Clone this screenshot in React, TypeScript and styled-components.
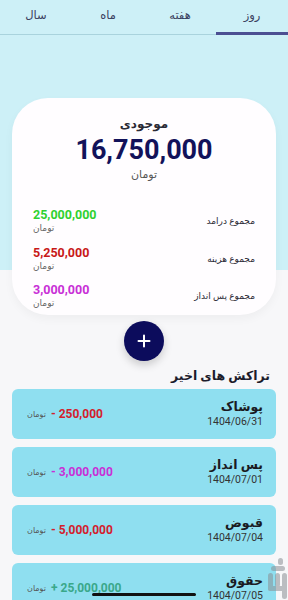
import styled, { createGlobalStyle } from "styled-components";

const GlobalStyle = createGlobalStyle`
	* {
		box-sizing: border-box;
	}
	html, body {
		margin: 0;
		padding: 0;
	}
	body {
		font-family: "Roboto", "DejaVu Sans", sans-serif;
		background: linear-gradient(#cdf0f7 0 270px, #f7f7f9 270px);
		min-height: 600px;
	}
`;

const Page = styled.div`
	direction: rtl;
	width: 288px;
	padding-bottom: 40px;
`;

const Tabs = styled.nav`
	display: flex;
	height: 35px;
	border-bottom: 1px solid #a9d3dd;
`;

const Tab = styled.div<{ $active?: boolean }>`
	flex: 1;
	display: flex;
	align-items: center;
	justify-content: center;
	font-size: 11.5px;
	color: #3b4160;
	border-bottom: 3px solid ${(p) => (p.$active ? "#4b4f92" : "transparent")};
	margin-bottom: -1px;
	padding-bottom: 2px;
`;

const SummaryCard = styled.section`
	margin: 63px 12px 0;
	background: #fffdff;
	border-radius: 36px;
	padding: 17px 21px 5px;
	box-shadow: 0 4px 10px rgba(0, 0, 0, 0.04);
`;

const BalanceTitle = styled.div`
	text-align: center;
	font-size: 12px;
	font-weight: bold;
	line-height: 18px;
	color: #2a2a35;
`;

const BalanceAmount = styled.div`
	text-align: center;
	font-size: 27px;
	font-weight: bold;
	line-height: 34px;
	color: #12125a;
	direction: ltr;
`;

const BalanceUnit = styled.div`
	text-align: center;
	font-size: 11px;
	line-height: 16px;
	color: #555;
	margin-bottom: 24px;
`;

const TotalRow = styled.div`
	display: flex;
	align-items: center;
	justify-content: space-between;
	margin-bottom: 9.5px;

	&:last-child {
		margin-bottom: 0;
	}
`;

const TotalLabel = styled.div`
	font-size: 9px;
	color: #2a2a35;
`;

const TotalValue = styled.div`
	display: flex;
	flex-direction: column;
	align-items: flex-end;
`;

const Amount = styled.div<{ $color: string }>`
	font-size: 12.5px;
	font-weight: bold;
	line-height: 15px;
	color: ${(p) => p.$color};
	direction: ltr;
`;

const Unit = styled.div`
	font-size: 9px;
	line-height: 13px;
	color: #666;
`;

const AddButton = styled.button`
	display: flex;
	align-items: center;
	justify-content: center;
	width: 40px;
	height: 40px;
	margin: 6px auto 0;
	border: none;
	border-radius: 50%;
	background: #0c0c5c;
	box-shadow: 0 4px 8px rgba(0, 0, 0, 0.18);
	padding: 0;
`;

const SectionTitle = styled.h2`
	margin: 6px 18px 0 0;
	font-size: 12.5px;
	font-weight: bold;
	line-height: 18px;
	color: #1c1c2c;
`;

const List = styled.div`
	display: flex;
	flex-direction: column;
	gap: 8px;
	margin: 4px 12px 0;
`;

const TxCard = styled.div`
	display: flex;
	align-items: center;
	justify-content: space-between;
	height: 50px;
	padding: 0 13px 0 15px;
	background: #8fdff0;
	border-radius: 6px;
`;

const TxInfo = styled.div`
	display: flex;
	flex-direction: column;
	align-items: flex-start;
`;

const TxTitle = styled.div`
	font-size: 12.5px;
	font-weight: bold;
	line-height: 16px;
	color: #1a1a22;
`;

const TxDate = styled.div`
	font-size: 10.5px;
	line-height: 14px;
	color: #333;
`;

const TxAmount = styled.div`
	display: flex;
	align-items: center;
	gap: 3px;
`;

const TxValue = styled.span<{ $color: string }>`
	font-size: 12px;
	font-weight: bold;
	color: ${(p) => p.$color};
	direction: ltr;
`;

const TxSign = styled.span<{ $color: string }>`
	font-size: 12px;
	font-weight: bold;
	color: ${(p) => p.$color};
`;

const TxUnit = styled.span`
	font-size: 8px;
	color: #555;
	margin-right: 2px;
`;

const HomeIndicator = styled.div`
	position: fixed;
	left: 92px;
	bottom: 4px;
	width: 104px;
	height: 3px;
	border-radius: 2px;
	background: #111;
`;

const Watermark = styled.svg`
	position: fixed;
	right: 0;
	bottom: 0;
	opacity: 0.55;
`;

const tabs = ["روز", "هفته", "ماه", "سال"];

const totals = [
	{ label: "مجموع درامد", value: "25,000,000", color: "#2fd12f" },
	{ label: "مجموع هزینه", value: "5,250,000", color: "#c81818" },
	{ label: "مجموع پس انداز", value: "3,000,000", color: "#c82fd6" },
];

const transactions = [
	{ title: "پوشاک", date: "1404/06/31", value: "250,000", sign: "-", color: "#d4202c" },
	{ title: "پس انداز", date: "1404/07/01", value: "3,000,000", sign: "-", color: "#c82fd6" },
	{ title: "قبوض", date: "1404/07/04", value: "5,000,000", sign: "-", color: "#d4202c" },
	{ title: "حقوق", date: "1404/07/05", value: "25,000,000", sign: "+", color: "#3aa88a" },
];

const App = () => {
	return (
		<Page>
			<GlobalStyle />
			<Tabs>
				{tabs.map((t, i) => (
					<Tab key={t} $active={i === 0}>
						{t}
					</Tab>
				))}
			</Tabs>

			<SummaryCard>
				<BalanceTitle>موجودی</BalanceTitle>
				<BalanceAmount>16,750,000</BalanceAmount>
				<BalanceUnit>تومان</BalanceUnit>
				{totals.map((row) => (
					<TotalRow key={row.label}>
						<TotalLabel>{row.label}</TotalLabel>
						<TotalValue>
							<Amount $color={row.color}>{row.value}</Amount>
							<Unit>تومان</Unit>
						</TotalValue>
					</TotalRow>
				))}
			</SummaryCard>

			<AddButton aria-label="add">
				<svg width="14" height="14" viewBox="0 0 14 14">
					<path d="M7 1.5v11M1.5 7h11" stroke="#fff" strokeWidth="2" strokeLinecap="round" />
				</svg>
			</AddButton>

			<SectionTitle>تراکش های اخیر</SectionTitle>

			<List>
				{transactions.map((tx) => (
					<TxCard key={tx.title}>
						<TxInfo>
							<TxTitle>{tx.title}</TxTitle>
							<TxDate>{tx.date}</TxDate>
						</TxInfo>
						<TxAmount>
							<TxValue $color={tx.color}>{tx.value}</TxValue>
							<TxSign $color={tx.color}>{tx.sign}</TxSign>
							<TxUnit>تومان</TxUnit>
						</TxAmount>
					</TxCard>
				))}
			</List>

			<Watermark width="26" height="44" viewBox="0 0 26 44">
				<g fill="#8a8f94">
					<rect x="16" y="2" width="5" height="7" rx="2.5" />
					<rect x="9" y="10" width="14" height="5" rx="2.5" />
					<rect x="6" y="17" width="5" height="18" rx="2.5" />
					<rect x="13" y="17" width="5" height="14" rx="2.5" />
					<rect x="6" y="30" width="18" height="5" rx="2.5" />
					<rect x="20" y="17" width="5" height="26" rx="2.5" />
				</g>
			</Watermark>
			<HomeIndicator />
		</Page>
	);
};

export default App;
